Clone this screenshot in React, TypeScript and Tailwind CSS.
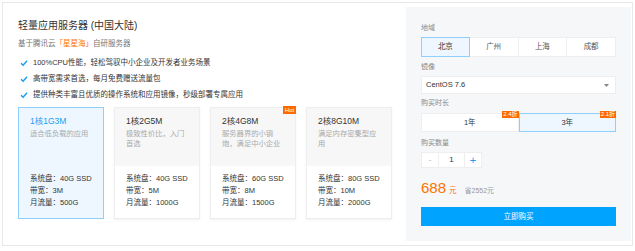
import React from 'react';

const font = { fontFamily: '"Liberation Sans", "Noto Sans CJK SC", sans-serif' };

const features = [
  '100%CPU性能，轻松驾驭中小企业及开发者业务场景',
  '高带宽需求首选，每月免费赠送流量包',
  '提供种类丰富且优质的操作系统和应用镜像，秒级部署专属应用',
];

const plans = [
  { name: '1核1G3M', desc: '适合低负载的应用', disk: '40G SSD', bw: '3M', traffic: '500G', active: true },
  { name: '1核2G5M', desc: '极致性价比，入门首选', disk: '40G SSD', bw: '5M', traffic: '1000G' },
  { name: '2核4G8M', desc: '服务器界的小钢炮，满足中小企业', disk: '60G SSD', bw: '8M', traffic: '1500G', hot: true },
  { name: '2核8G10M', desc: '满足内存密集型应用', disk: '80G SSD', bw: '10M', traffic: '2000G' },
];

const regions = ['北京', '广州', '上海', '成都'];

function Check() {
  return (
    <svg width="8" height="8" viewBox="0 0 8 8" className="shrink-0">
      <path d="M1 4.2 L3.1 6.2 L7 1.8" fill="none" stroke="#1d9bf0" strokeWidth="1.4" />
    </svg>
  );
}

function PlanCard({ plan }: { plan: (typeof plans)[number] }) {
  return (
    <div
      className={
        'relative flex h-[112px] w-[86px] flex-col border ' +
        (plan.active
          ? 'border-[#8ed0fb] bg-[#eef7ff]'
          : 'border-[#eeeeee] bg-white shadow-[0_1px_2px_rgba(0,0,0,0.06)]')
      }
    >
      {plan.hot && (
        <div className="absolute right-[-1px] top-[-2px] flex h-[8px] w-[13px] items-center justify-center bg-[#ff6a00] text-[6px] leading-none text-white">
          Hot
        </div>
      )}
      <div className={'h-[58px] pl-[11px] pr-[8px] pt-[7px] ' + (plan.active ? '' : 'bg-[#f7f7f7]')}>
        <div className={'text-[8.5px] leading-[12px] ' + (plan.active ? 'text-[#1d9bf0]' : 'text-[#333]')}>
          {plan.name}
        </div>
        <div className="mt-[2px] text-[7.3px] leading-[9.5px] text-[#aaa]">{plan.desc}</div>
      </div>
      <div className="pl-[11px] pt-[7px] text-[7.5px] leading-[12px] text-[#333]">
        <div>系统盘：{plan.disk}</div>
        <div>带宽：{plan.bw}</div>
        <div>月流量：{plan.traffic}</div>
      </div>
    </div>
  );
}

export default function App() {
  return (
    <div className="h-[251px] w-[635px] bg-white p-[2px]" style={font}>
      <div className="flex h-[244px] w-[631px] border border-[#e8e8e8]">
        <div className="w-[403px] pl-[15px] pt-[16px]">
          <div className="text-[10px] leading-[14px] text-[#333]">轻量应用服务器 (中国大陆)</div>
          <div className="mt-[6px] text-[7.5px] leading-[10px] text-[#777]">
            基于腾讯云<span className="text-[#ff7200]">「星星海」</span>自研服务器
          </div>
          <div className="mt-[6px]">
            {features.map((f) => (
              <div key={f} className="flex h-[16px] items-center gap-[5px] pl-[2px] text-[7.5px] text-[#333]">
                <Check />
                <span>{f}</span>
              </div>
            ))}
          </div>
          <div className="mt-[4px] flex gap-[10px]">
            {plans.map((p) => (
              <PlanCard key={p.name} plan={p} />
            ))}
          </div>
        </div>

        <div className="my-[4px] w-[225px] bg-[#f6f7f9] px-[15px] pt-[16px]">
          <div className="text-[7px] leading-[10px] text-[#888]">地域</div>
          <div className="mt-[4px] grid h-[20px] grid-cols-4">
            {regions.map((r, i) => (
              <div
                key={r}
                className={
                  'flex items-center justify-center border text-[7.5px] ' +
                  (i === 0
                    ? 'border-[#8ed0fb] bg-[#eef7ff] text-[#333]'
                    : 'border-[#eeeeee] border-l-0 bg-white text-[#555]')
                }
              >
                {r}
              </div>
            ))}
          </div>

          <div className="mt-[5px] text-[7px] leading-[10px] text-[#888]">镜像</div>
          <div className="mt-[4px] flex h-[18px] items-center justify-between border border-[#eeeeee] bg-white pl-[4px] pr-[6px] text-[7.5px] text-[#333]">
            <span>CentOS 7.6</span>
            <svg width="5" height="3" viewBox="0 0 5 3">
              <path d="M0 0 L5 0 L2.5 3 Z" fill="#888" />
            </svg>
          </div>

          <div className="mt-[4px] text-[7px] leading-[10px] text-[#888]">购买时长</div>
          <div className="mt-[5px] grid h-[19px] grid-cols-2">
            <div className="relative flex items-center justify-center border border-[#eeeeee] bg-white text-[7.5px] text-[#333]">
              1年
              <span className="absolute right-[-1px] top-[-3px] bg-[#ff6a00] px-[1px] text-[6px] leading-[7px] text-white">2.4折</span>
            </div>
            <div className="relative flex items-center justify-center border border-[#8ed0fb] bg-[#eef7ff] text-[7.5px] text-[#333]">
              3年
              <span className="absolute right-[-1px] top-[-3px] bg-[#ff6a00] px-[1px] text-[6px] leading-[7px] text-white">2.1折</span>
            </div>
          </div>

          <div className="mt-[6px] text-[7px] leading-[10px] text-[#888]">购买数量</div>
          <div className="mt-[4px] flex h-[16px] text-[8px]">
            <div className="flex w-[18px] items-center justify-center border border-[#eeeeee] bg-white text-[#aaa]">-</div>
            <div className="flex w-[26px] items-center justify-center border border-l-0 border-[#eeeeee] bg-white text-[#333]">1</div>
            <div className="flex w-[17px] items-center justify-center border border-l-0 border-[#eeeeee] bg-white text-[11px] text-[#1d9bf0]">+</div>
          </div>

          <div className="mt-[11px] flex h-[18px] items-baseline">
            <span className="text-[15px] leading-[18px] text-[#ff7200]">688</span>
            <span className="ml-[3px] text-[7.5px] text-[#ff7200]">元</span>
            <span className="ml-[8px] text-[7px] text-[#999]">省2552元</span>
          </div>

          <div className="mt-[10px] flex h-[19px] items-center justify-center bg-[#00a4ff] text-[7.5px] text-white">
            立即购买
          </div>
        </div>
      </div>
    </div>
  );
}
